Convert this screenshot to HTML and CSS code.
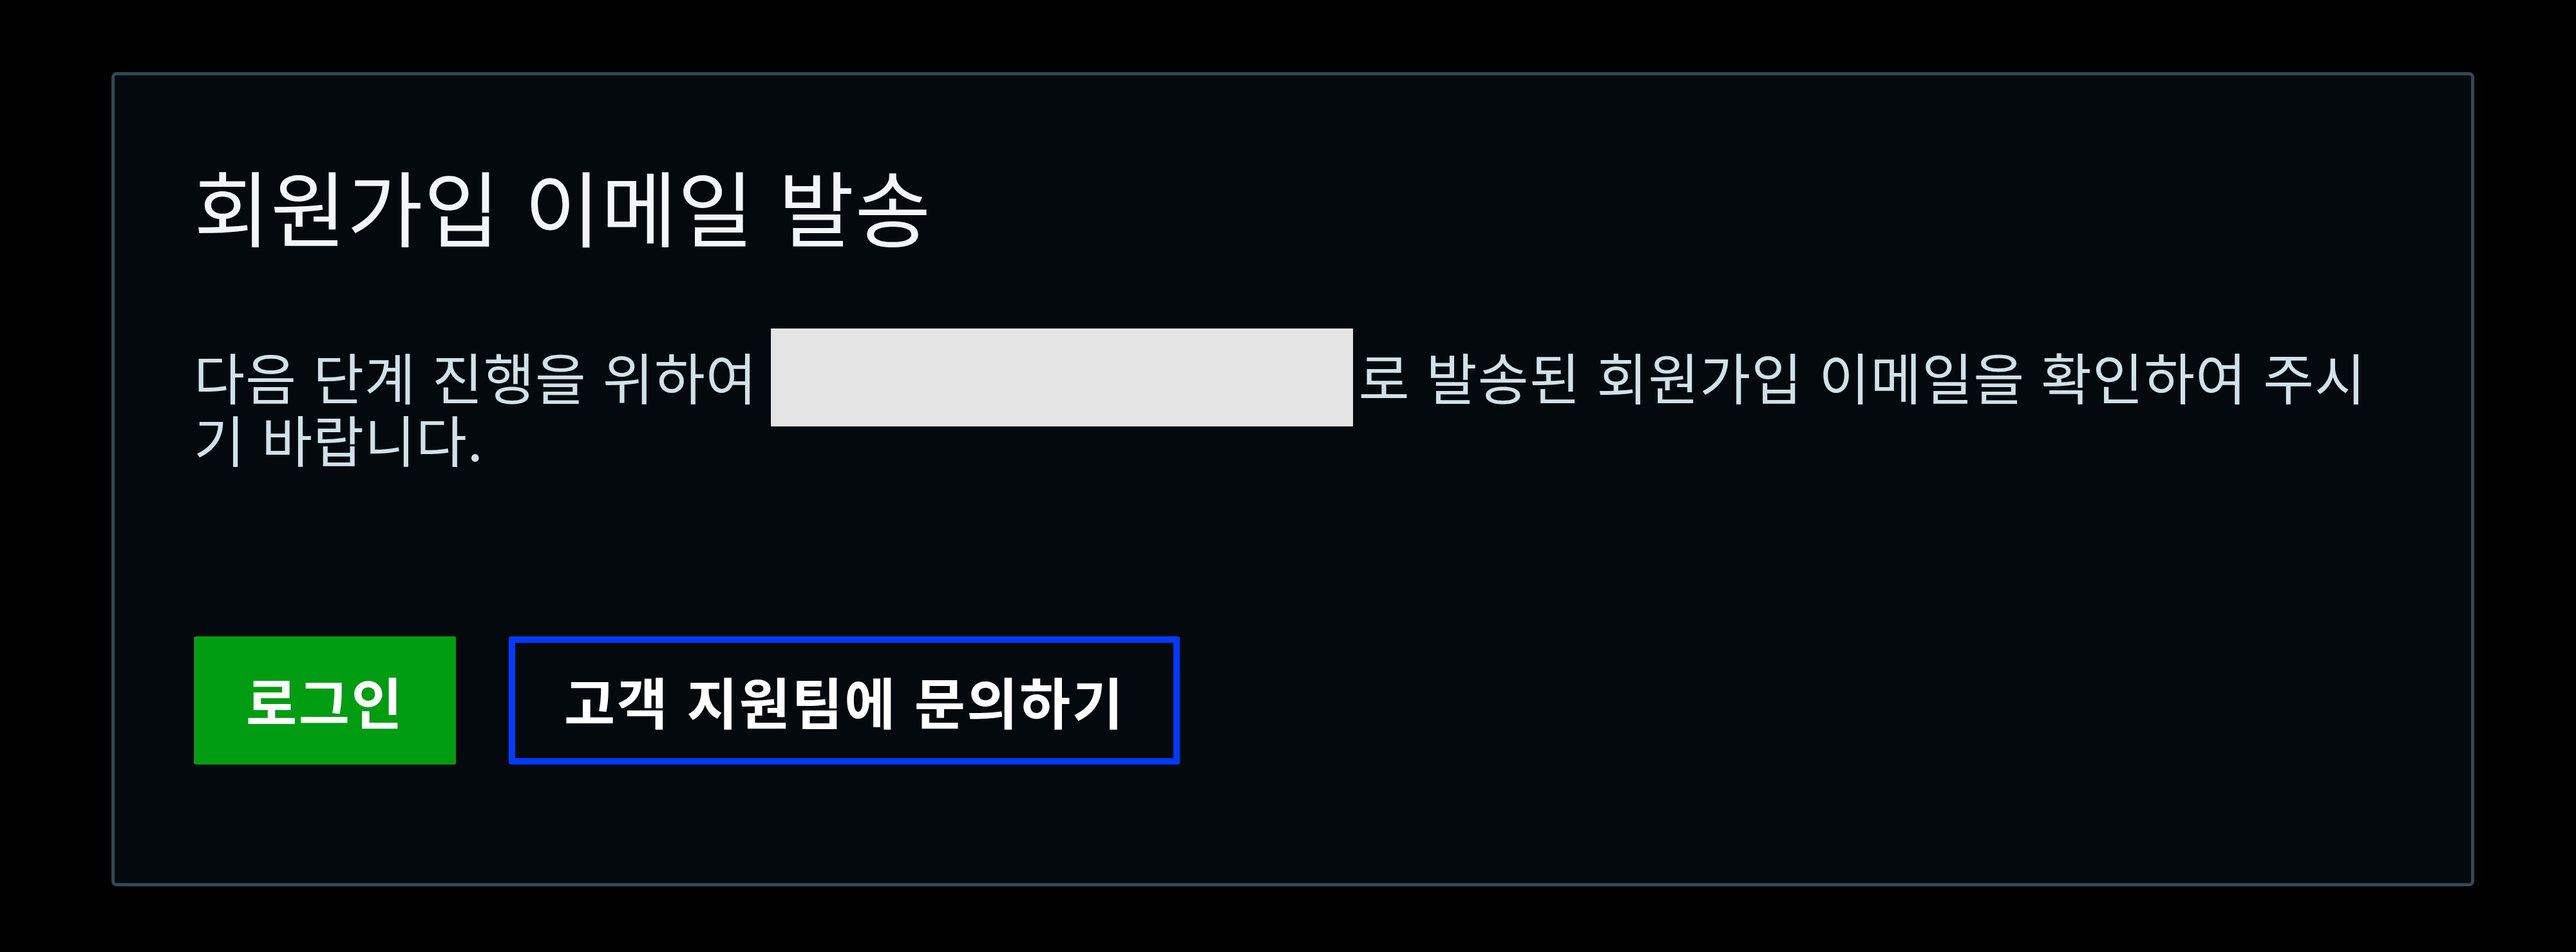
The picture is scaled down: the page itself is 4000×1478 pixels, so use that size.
FILE: index.html
```html
<!DOCTYPE html>
<html lang="ko">

<head>
    <meta charset="UTF-8">
    <meta name="viewport" content="width=device-width, initial-scale=1.0">
    <title>회원가입 이메일 발송</title>
    <link rel="stylesheet" href="styles.css">
</head>

<body>
    <div class="card">
        <h1 class="title">회원가입 이메일 발송</h1>
        <p class="message">다음 단계 진행을 위하여 <span class="email-mask"></span>로 발송된 회원가입 이메일을 확인하여 주시기 바랍니다.</p>
        <div class="actions">
            <a href="#" class="btn btn-login">로그인</a>
            <a href="#" class="btn btn-support">고객 지원팀에 문의하기</a>
        </div>
    </div>
</body>

</html>
```

FILE: styles.css
```css
body, html {
    margin: 0;
    padding: 0;
    background-color: #000;
    font-family: "Noto Sans CJK KR", "Noto Sans", sans-serif;
}

.card {
    margin: 112px 158px 0 173px;
    padding: 129px 123px 184px;
    background-color: #03090d;
    border: 5px solid #2d4a56;
    border-radius: 8px;
}

.title {
    margin: 0 0 143px;
    font-size: 128px;
    line-height: 146px;
    letter-spacing: 0.01em;
    font-weight: normal;
    color: #f2f6f8;
}

.message {
    margin: 0 0 259px;
    font-size: 86px;
    line-height: 97px;
    letter-spacing: 0.01em;
    color: #cfe1e9;
}

/* masque gris sur l'adresse e-mail */
.email-mask {
    display: inline-block;
    width: 904px;
    height: 152px;
    margin: -100px 9px -41px -4px;
    background-color: #e4e4e4;
}

.actions {
    display: flex;
    gap: 82px;
}

.btn {
    box-sizing: border-box;
    height: 199px;
    display: flex;
    align-items: center;
    justify-content: center;
    padding: 0 71px;
    border: 10px solid;
    border-radius: 3px;
    font-size: 86px;
    font-weight: bold;
    letter-spacing: 0.03em;
    color: #fff;
    text-decoration: none;
}

.btn-login {
    background-color: #009d12;
    border-color: #009d12;
}

.btn-support {
    padding: 0 76px;
    border-color: #0039ff;
}
```
